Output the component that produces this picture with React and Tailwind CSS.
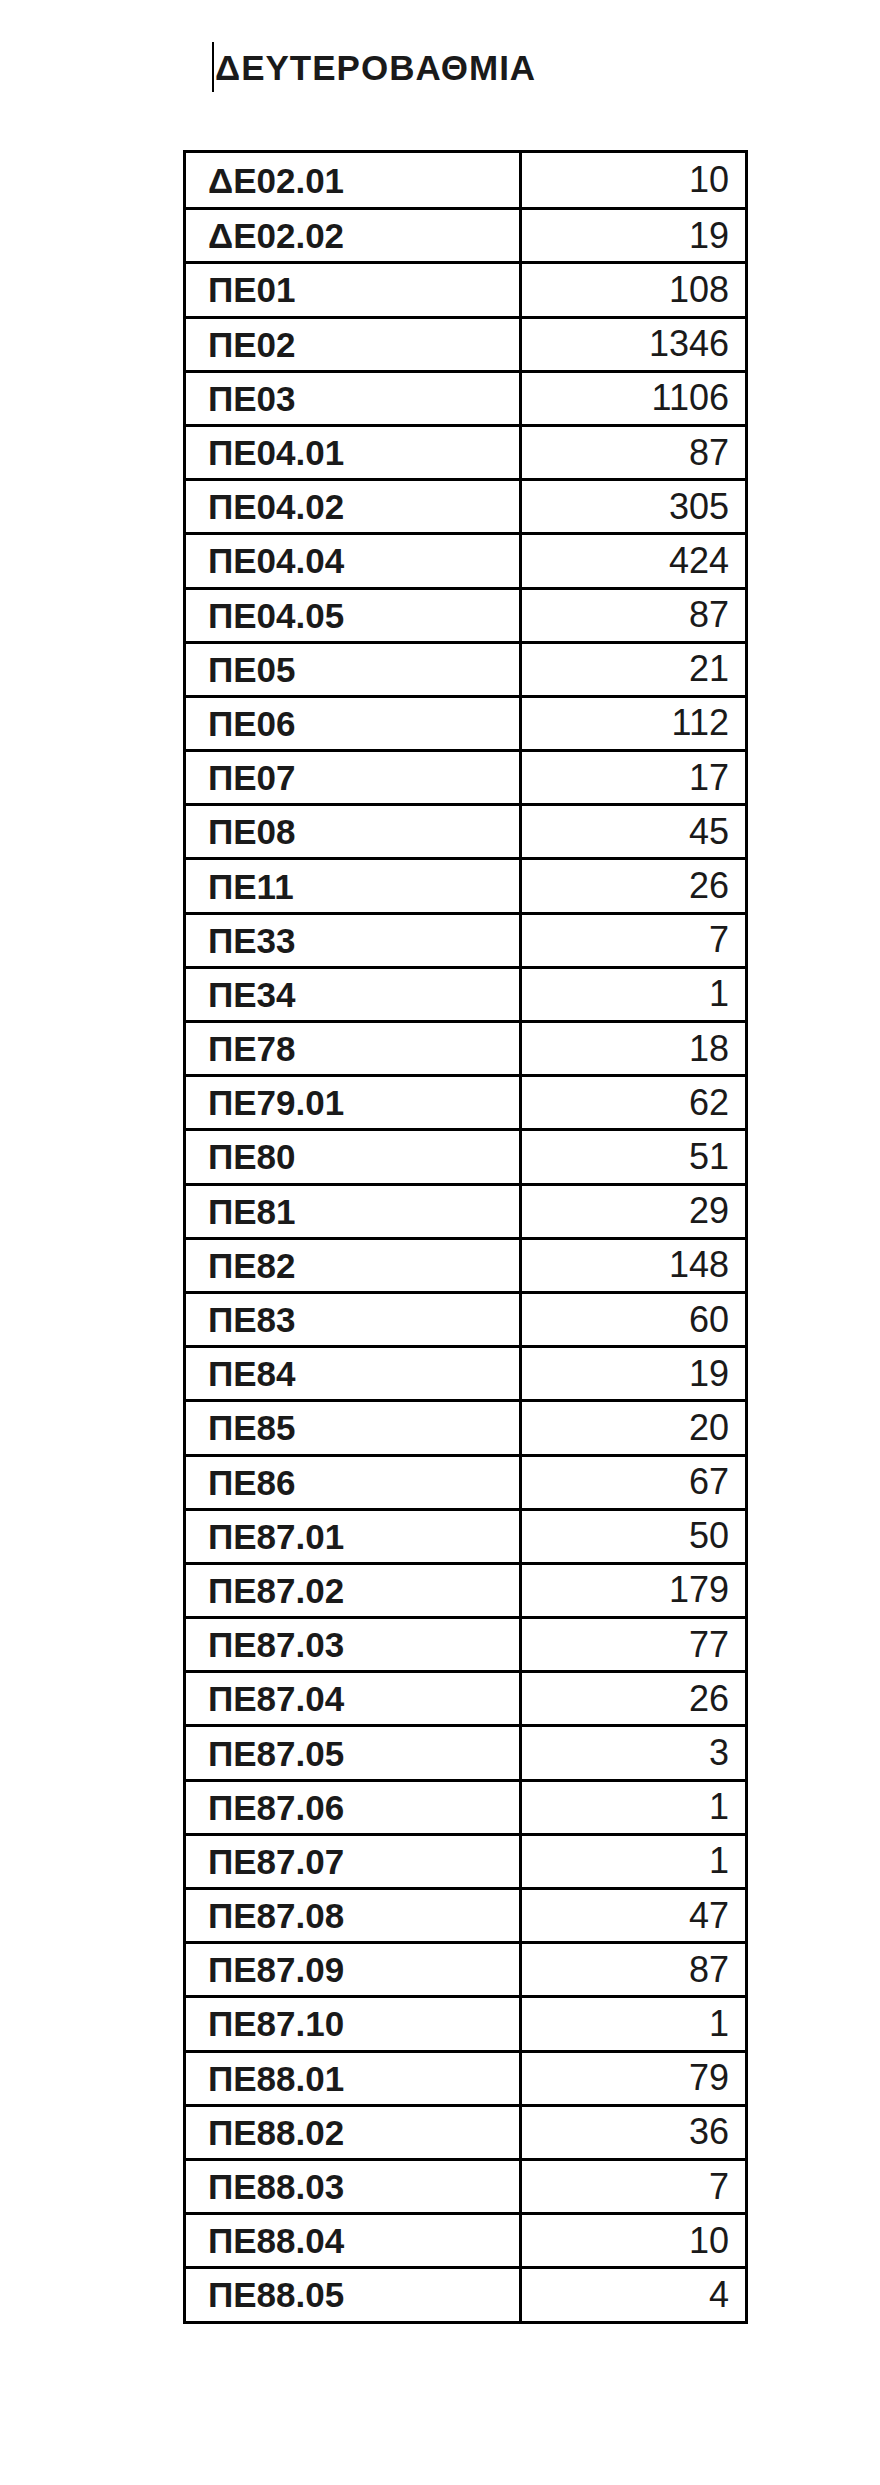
const rows = [
    ["ΔΕ02.01", "10"],
    ["ΔΕ02.02", "19"],
    ["ΠΕ01", "108"],
    ["ΠΕ02", "1346"],
    ["ΠΕ03", "1106"],
    ["ΠΕ04.01", "87"],
    ["ΠΕ04.02", "305"],
    ["ΠΕ04.04", "424"],
    ["ΠΕ04.05", "87"],
    ["ΠΕ05", "21"],
    ["ΠΕ06", "112"],
    ["ΠΕ07", "17"],
    ["ΠΕ08", "45"],
    ["ΠΕ11", "26"],
    ["ΠΕ33", "7"],
    ["ΠΕ34", "1"],
    ["ΠΕ78", "18"],
    ["ΠΕ79.01", "62"],
    ["ΠΕ80", "51"],
    ["ΠΕ81", "29"],
    ["ΠΕ82", "148"],
    ["ΠΕ83", "60"],
    ["ΠΕ84", "19"],
    ["ΠΕ85", "20"],
    ["ΠΕ86", "67"],
    ["ΠΕ87.01", "50"],
    ["ΠΕ87.02", "179"],
    ["ΠΕ87.03", "77"],
    ["ΠΕ87.04", "26"],
    ["ΠΕ87.05", "3"],
    ["ΠΕ87.06", "1"],
    ["ΠΕ87.07", "1"],
    ["ΠΕ87.08", "47"],
    ["ΠΕ87.09", "87"],
    ["ΠΕ87.10", "1"],
    ["ΠΕ88.01", "79"],
    ["ΠΕ88.02", "36"],
    ["ΠΕ88.03", "7"],
    ["ΠΕ88.04", "10"],
    ["ΠΕ88.05", "4"],
]

export default function App() {
    return (
        <div className="min-h-[2485px] w-[880px] bg-white text-[#1a1a1a] font-['Liberation_Sans',Arial,sans-serif]">
            {/* heading with text caret */}
            <div className="pt-[42px] pl-[212px] flex items-center gap-[1px]">
                <span className="w-[2px] h-[50px] bg-black" />
                <h1 className="text-[35px] leading-none font-bold tracking-[1px]">ΔΕΥΤΕΡΟΒΑΘΜΙΑ</h1>
            </div>

            {/* table */}
            <div className="mt-[58px] ml-[183px] w-[565px] border-[3px] border-black">
                {rows.map(([code, count], i) => (
                    <div
                        key={code}
                        className={`flex h-[54.2px] ${i > 0 ? "border-t-[3px] border-black" : ""}`}
                    >
                        <div className="w-[336px] border-r-[3px] border-black pl-[22px] flex items-center text-[35px] font-bold leading-none">
                            {code}
                        </div>
                        <div className="flex-1 pr-[16px] flex items-center justify-end text-[36px] leading-none">
                            {count}
                        </div>
                    </div>
                ))}
            </div>
        </div>
    )
}
